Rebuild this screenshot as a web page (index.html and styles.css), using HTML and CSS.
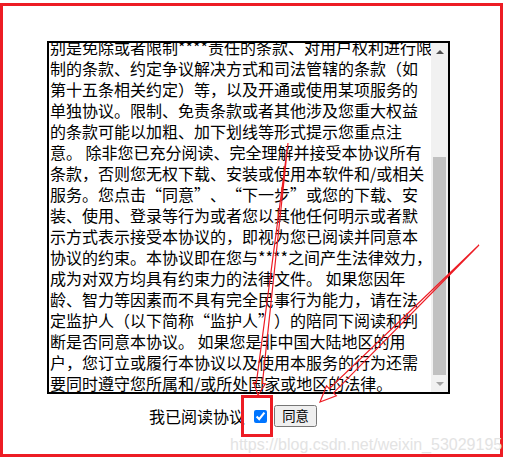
FILE: index.html
```html
<!DOCTYPE html>
<html lang="zh-CN">
<head>
<meta charset="utf-8">
<title>用户协议</title>
<link rel="stylesheet" href="styles.css">
</head>
<body>
<div class="page">
  <div class="content">
    <div class="agreement">
      <div class="text-view">
        <p class="text">别是免除或者限制****责任的条款、对用户权利进行限<br>制的条款、约定争议解决方式和司法管辖的条款（如<br>第十五条相关约定）等，以及开通或使用某项服务的<br>单独协议。限制、免责条款或者其他涉及您重大权益<br>的条款可能以加粗、加下划线等形式提示您重点注<br>意。 除非您已充分阅读、完全理解并接受本协议所有<br>条款，否则您无权下载、安装或使用本软件和/或相关<br>服务。您点击<span class="q-open">“</span>同意<span class="q-close">”</span>、<span class="q-open">“</span>下一步<span class="q-close">”</span>或您的下载、安<br>装、使用、登录等行为或者您以其他任何明示或者默<br>示方式表示接受本协议的，即视为您已阅读并同意本<br>协议的约束。本协议即在您与****之间产生法律效力，<br>成为对双方均具有约束力的法律文件。 如果您因年<br>龄、智力等因素而不具有完全民事行为能力，请在法<br>定监护人（以下简称<span class="q-open">“</span>监护人<span class="q-close">”</span>）的陪同下阅读和判<br>断是否同意本协议。 如果您是非中国大陆地区的用<br>户，您订立或履行本协议以及使用本服务的行为还需<br>要同时遵守您所属和/或所处国家或地区的法律。</p>
      </div>
      <div class="scrollbar">
        <div class="sb-btn"><span class="tri-up"></span></div>
        <div class="sb-track"><div class="sb-thumb"></div></div>
        <div class="sb-btn"><span class="tri-down"></span></div>
      </div>
    </div>
    <div class="confirm-row">
      <span class="confirm-label">我已阅读协议</span>
      <input type="checkbox" class="confirm-check" checked>
      <button class="agree-btn" type="button">同意</button>
    </div>
  </div>

  <div class="frame-mark"></div>
  <div class="check-mark"></div>
  <svg class="arrows" width="510" height="462" viewBox="0 0 510 462">
    <polygon points="288,143 262.4,383.4 265.4,383.8 258,395 253.5,382.4 256.4,382.7" />
    <polygon points="479,245 333.5,392.9 336.3,395.7 320,402 326.5,385.8 329.3,388.6" />
  </svg>
  <div class="watermark">https://blog.csdn.net/weixin_53029195</div>
</div>
</body>
</html>
```

FILE: styles.css
```css
html, body {
  margin: 0;
  padding: 0;
  background: #ffffff;
}

.page {
  position: relative;
  width: 510px;
  height: 462px;
  overflow: hidden;
  background: #ffffff;
  font-family: "Noto Sans CJK SC", "Noto Sans", sans-serif;
  color: #000000;
}

.content {
  padding: 41px 0 0 47px;
}

.agreement {
  display: flex;
  width: 403px;
  height: 353px;
  box-sizing: border-box;
  border: 2px solid #000000;
  background: #ffffff;
}

.text-view {
  flex: 1;
  overflow: hidden;
  display: flex;
  flex-direction: column;
  justify-content: flex-end;
  padding-left: 1px;
}

.text {
  flex-shrink: 0;
  margin: 0 0 -2px 0;
  font-size: 16px;
  line-height: 21px;
  white-space: nowrap;
}

.q-open,
.q-close {
  display: inline-block;
  width: 1em;
}

.q-open {
  text-align: right;
}

.q-close {
  text-align: left;
}

.scrollbar {
  width: 17px;
  display: flex;
  flex-direction: column;
  background: #f1f1f1;
}

.sb-btn {
  height: 17px;
  display: flex;
  align-items: center;
  justify-content: center;
}

.tri-up {
  width: 0;
  height: 0;
  border-left: 4px solid transparent;
  border-right: 4px solid transparent;
  border-bottom: 4px solid #505050;
}

.tri-down {
  width: 0;
  height: 0;
  border-left: 4px solid transparent;
  border-right: 4px solid transparent;
  border-top: 4px solid #a3a3a3;
}

.sb-track {
  flex: 1;
  display: flex;
  flex-direction: column;
  justify-content: flex-end;
}

.sb-thumb {
  height: 218px;
  margin: 0 2px;
  background: #c1c1c1;
}

.confirm-row {
  display: flex;
  align-items: center;
  margin-top: 11px;
  padding-left: 102px;
}

.confirm-label {
  font-size: 16px;
  line-height: 21px;
}

.confirm-check {
  margin: 0 0 0 9px;
  width: 13px;
  height: 13px;
}

.agree-btn {
  margin-left: 7px;
  width: 43px;
  height: 22px;
  padding: 0;
  font-family: "Noto Sans CJK SC", sans-serif;
  font-size: 13.33px;
  line-height: 16px;
  color: #000000;
}

/* annotation overlays */
.frame-mark {
  position: absolute;
  left: 0;
  top: 3px;
  width: 503px;
  height: 454px;
  box-sizing: border-box;
  border: 3px solid #ed1c24;
  pointer-events: none;
}

.check-mark {
  position: absolute;
  left: 241px;
  top: 395px;
  width: 32px;
  height: 42px;
  box-sizing: border-box;
  border: 3px solid #ed1c24;
  pointer-events: none;
}

.arrows {
  position: absolute;
  left: 0;
  top: 0;
  pointer-events: none;
}

.arrows polygon {
  fill: none;
  stroke: #ed1c24;
  stroke-width: 1.2;
  stroke-linejoin: miter;
}

.watermark {
  position: absolute;
  left: 230px;
  top: 437px;
  font-family: "Liberation Sans", Arial, sans-serif;
  font-size: 16px;
  line-height: 16px;
  color: #e3e3e3;
  white-space: nowrap;
  pointer-events: none;
}
```
